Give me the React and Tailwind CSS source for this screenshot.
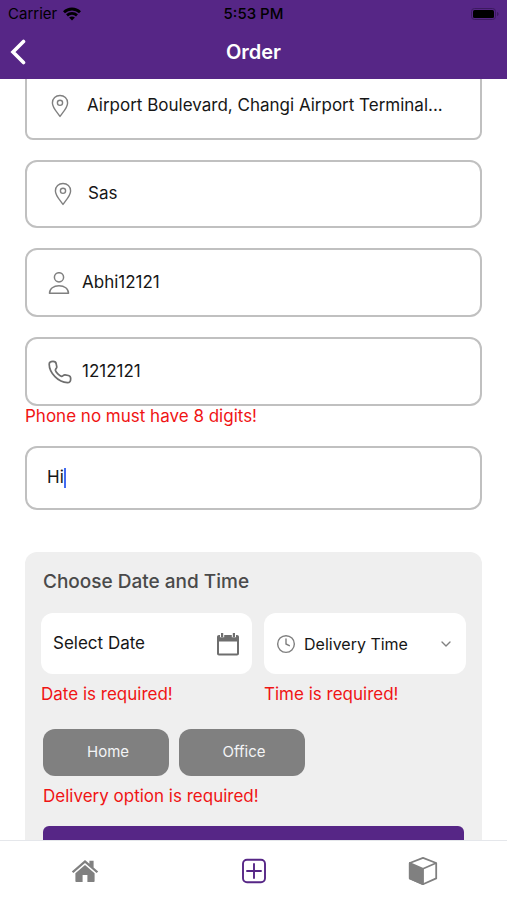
import React, { useState } from 'react';
import { ChevronDown, Clock } from 'lucide-react';

const WifiIcon = () => (
  <svg viewBox="0 0 18 14" className="w-[18px] h-[14px]" fill="none" stroke="currentColor" strokeWidth="2.8">
    <path d="M1 5.2C5.5 0.9 12.5 0.9 17 5.2" />
    <path d="M4 8.4C6.8 5.8 11.2 5.8 14 8.4" />
    <path d="M9 13.4L6.1 10.5C7.7 9.1 10.3 9.1 11.9 10.5Z" fill="currentColor" stroke="none" />
  </svg>
);

const BatteryIcon = () => (
  <svg viewBox="0 0 28 12" className="w-7 h-3">
    <rect x="0.5" y="0.5" width="24" height="11" rx="3" fill="none" stroke="#3c1a60" />
    <rect x="2" y="2" width="21" height="8" rx="1.5" fill="#000" />
    <path d="M26 4V8C27 7.6 27.6 7 27.6 6S27 4.4 26 4Z" fill="#3c1a60" />
  </svg>
);

const BackIcon = () => (
  <svg viewBox="0 0 16 26" className="w-4 h-[26px]" fill="none" stroke="currentColor" strokeWidth="3.6" strokeLinecap="round" strokeLinejoin="miter">
    <path d="M13.5 2.5L3 13L13.5 23.5" />
  </svg>
);

const PinIcon = () => (
  <svg viewBox="0 0 18 24" className="w-[18px] h-6" fill="none" stroke="currentColor" strokeWidth="1.4" strokeLinejoin="round">
    <path d="M9 22.4C6 18 1.4 13.6 1.4 8.9C1.4 4.6 4.7 1.5 9 1.5S16.6 4.6 16.6 8.9C16.6 13.6 12 18 9 22.4Z" />
    <circle cx="9" cy="8.8" r="2.6" />
  </svg>
);

const UserIcon = () => (
  <svg viewBox="0 0 22 24" className="w-[22px] h-6" fill="none" stroke="currentColor" strokeWidth="1.5" strokeLinejoin="round">
    <circle cx="11" cy="6.3" r="4.6" />
    <path d="M1.5 22.3C1.5 17.6 5.6 14.7 11 14.7S20.5 17.6 20.5 22.3Z" />
  </svg>
);

const PhoneIcon = () => (
  <svg viewBox="0 0 24 24" className="w-6 h-6" fill="none" stroke="currentColor" strokeWidth="1.7" strokeLinejoin="round">
    <path d="M1.2 4.2C1.2 2.2 2.8 1.3 5 1.3C7.2 1.3 8 2 8.2 3.8L8.8 6.8C9 8.4 7.2 8.8 7.4 10.2C8 12.4 11.2 15.8 13.6 16.4C14.8 16.6 15.4 14.6 17 14.8L20.4 15.5C22 15.8 22.7 16.8 22.7 18.8C22.7 21.4 21.6 22.8 19.4 22.7C10.4 22.4 1.3 13 1.2 4.2Z" />
  </svg>
);

const CalendarIcon = () => (
  <svg viewBox="0 0 24 24" className="w-6 h-6" fill="currentColor">
    <path
      fillRule="evenodd"
      d="M3 3H4V5.2H8.2V3H15.8V5.2H20V3H21C22.2 3 23 3.8 23 5V21.4C23 22.6 22.2 23.4 21 23.4H3C1.8 23.4 1 22.6 1 21.4V5C1 3.8 1.8 3 3 3ZM3 9.4V21.4H21V9.4Z"
    />
    <rect x="5" y="1" width="2.2" height="4" />
    <rect x="16.8" y="1" width="2.2" height="4" />
  </svg>
);

const HomeIcon = () => (
  <svg viewBox="0 0 28 24" className="w-7 h-6" fill="currentColor">
    <path d="M14 1L18.4 4.8V1.8H22.6V8.4L27.2 12.4L25.6 14L14 4L2.4 14L0.8 12.4Z" />
    <path d="M14 6L23.6 14.2V22C23.6 22.6 23.2 23 22.6 23H16.4V16H11.6V23H5.4C4.8 23 4.4 22.6 4.4 22V14.2Z" />
  </svg>
);

const PlusIcon = () => (
  <svg viewBox="0 0 26 26" className="w-[26px] h-[26px]" fill="none" stroke="currentColor" strokeWidth="1.9" strokeLinecap="round">
    <rect x="2" y="1.8" width="22" height="22.4" rx="4" />
    <path d="M13 6V20M6 13H20" />
  </svg>
);

const BoxIcon = () => (
  <svg viewBox="0 0 30 30" className="w-[30px] h-[30px]" stroke="currentColor" strokeWidth="1.8" strokeLinejoin="round">
    <path d="M15 1.8L28.2 7V22.4L15 28.2L1.8 22.4V7Z" fill="#fff" />
    <path d="M1.8 7L15 12.8V28.2L1.8 22.4Z" fill="currentColor" />
    <path d="M15 12.8L28.2 7" fill="none" />
  </svg>
);

const ErrorText = ({ children }) => <p className="text-[17px] leading-5 text-[#f01414]">{children}</p>;

const App = () => {
  const [order, setOrder] = useState({
    address: 'Airport Boulevard, Changi Airport Terminal...',
    unit: 'Sas',
    name: 'Abhi12121',
    phone: '1212121',
    note: 'Hi',
  });

  const handleChange = (e) => setOrder({ ...order, [e.target.name]: e.target.value });

  return (
    <div className="h-screen flex flex-col bg-white text-[#161616] font-['Inter','Liberation_Sans',sans-serif]">
      {/* Status bar and title */}
      <header className="shrink-0 bg-[#562686] text-white">
        <div className="h-7 grid grid-cols-3 items-center px-2 text-[15px] text-black">
          <span className="flex items-center gap-1.5">
            Carrier
            <WifiIcon />
          </span>
          <span className="text-center font-medium">5:53 PM</span>
          <span className="flex justify-end">
            <BatteryIcon />
          </span>
        </div>
        <div className="h-[51px] grid grid-cols-3 items-center px-2.5 pb-1">
          <button type="button" aria-label="Back" className="justify-self-start">
            <BackIcon />
          </button>
          <h1 className="text-center text-xl font-semibold">Order</h1>
        </div>
      </header>

      <main className="flex-1 min-h-0 overflow-hidden px-[25px]">
        {/* Contact details */}
        <div className="-mt-[7px] flex flex-col gap-5">
          <label className="h-[68px] flex items-center gap-[18px] pl-6 pr-2 border-2 border-[#c0c0c0] rounded-lg text-[#808080]">
            <PinIcon />
            <input name="address" aria-label="Address" value={order.address} onChange={handleChange} className="flex-1 min-w-0 outline-none text-[17px] text-[#161616]" />
          </label>
          <label className="h-[68px] flex items-center gap-4 pl-[27px] pr-6 border-2 border-[#c0c0c0] rounded-xl text-[#808080]">
            <PinIcon />
            <input name="unit" aria-label="Unit" value={order.unit} onChange={handleChange} className="flex-1 min-w-0 outline-none text-[17px] text-[#161616]" />
          </label>
          <label className="h-[69px] flex items-center gap-3 pl-[21px] pr-6 border-2 border-[#c0c0c0] rounded-xl text-[#808080]">
            <UserIcon />
            <input name="name" aria-label="Name" value={order.name} onChange={handleChange} className="flex-1 min-w-0 outline-none text-[17px] text-[#161616]" />
          </label>
          <div>
            <label className="h-[69px] flex items-center gap-2.5 pl-[21px] pr-6 border-2 border-[#c0c0c0] rounded-xl text-[#6e6e6e]">
              <PhoneIcon />
              <input name="phone" aria-label="Phone number" value={order.phone} onChange={handleChange} className="flex-1 min-w-0 outline-none text-[17px] text-[#161616]" />
            </label>
            <ErrorText>Phone no must have 8 digits!</ErrorText>
          </div>
          <label className="h-16 flex items-center pl-5 pr-6 border-2 border-[#c0c0c0] rounded-xl">
            <input name="note" aria-label="Note" value={order.note} onChange={handleChange} className="field-sizing-content outline-none text-[17px] caret-[#426bf2]" />
            <span className="w-[2px] h-5 bg-[#426bf2]" />
          </label>
        </div>

        {/* Date, time and delivery option */}
        <section className="mt-[42px] px-4 pt-4 bg-[#efefef] rounded-xl">
          <h2 className="px-0.5 text-[19px] leading-7 font-medium text-[#4a4a4a]">Choose Date and Time</h2>
          <div className="mt-[17px] flex gap-3">
            <div className="flex-[211]">
              <button type="button" className="w-full h-[61px] px-3 flex items-center justify-between bg-white rounded-xl text-[17px]">
                Select Date
                <span className="text-[#6e6e6e]">
                  <CalendarIcon />
                </span>
              </button>
              <div className="mt-2.5">
                <ErrorText>Date is required!</ErrorText>
              </div>
            </div>
            <div className="flex-[202]">
              <label className="h-[61px] px-3 flex items-center gap-2 bg-white rounded-xl text-[#808080]">
                <Clock className="w-5 h-5" strokeWidth={1.7} />
                <select aria-label="Delivery Time" className="flex-1 min-w-0 appearance-none outline-none text-base text-[#161616]">
                  <option>Delivery Time</option>
                </select>
                <ChevronDown className="w-4 h-4" />
              </label>
              <div className="mt-2.5">
                <ErrorText>Time is required!</ErrorText>
              </div>
            </div>
          </div>

          <div className="mt-[25px] px-0.5">
            <div className="flex gap-2.5">
              <button type="button" className="w-[126px] h-[47px] pl-1 bg-[#808080] rounded-xl text-[15px] text-gray-100">
                Home
              </button>
              <button type="button" className="w-[126px] h-[47px] pl-1 bg-[#808080] rounded-xl text-[15px] text-gray-100">
                Office
              </button>
            </div>
            <div className="mt-2.5 mb-5">
              <ErrorText>Delivery option is required!</ErrorText>
            </div>
            <button type="submit" aria-label="Submit order" className="w-full h-14 bg-[#562686] rounded-md" />
          </div>
        </section>
      </main>

      {/* Bottom tabs */}
      <nav className="shrink-0 h-[60px] grid grid-cols-3 items-center justify-items-center border-t border-gray-200 bg-white text-[#808080]">
        <a href="#home" aria-label="Home">
          <HomeIcon />
        </a>
        <a href="#order" aria-label="New order" className="text-[#562686]">
          <PlusIcon />
        </a>
        <a href="#packages" aria-label="Packages">
          <BoxIcon />
        </a>
      </nav>
    </div>
  );
};

export default App;
